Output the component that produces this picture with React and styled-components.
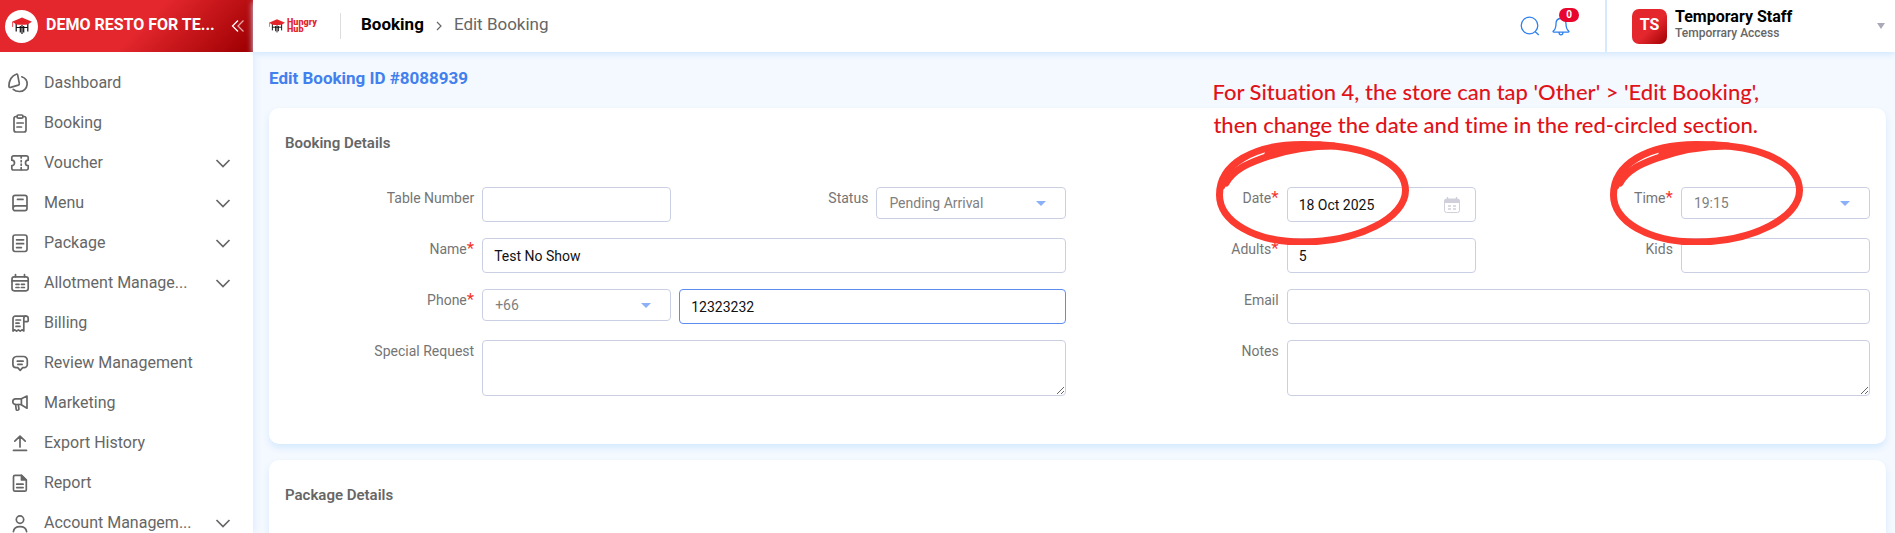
import React, { useState } from "react";
import styled, { createGlobalStyle } from "styled-components";

const menuItems = [
  { name: "Dashboard", icon: "dashboard" },
  { name: "Booking", icon: "booking" },
  { name: "Voucher", icon: "voucher", more: true },
  { name: "Menu", icon: "menu", more: true },
  { name: "Package", icon: "package", more: true },
  { name: "Allotment Manage...", icon: "allotment", more: true },
  { name: "Billing", icon: "billing" },
  { name: "Review Management", icon: "review" },
  { name: "Marketing", icon: "marketing" },
  { name: "Export History", icon: "exportHistory" },
  { name: "Report", icon: "report" },
  { name: "Account Managem...", icon: "account", more: true },
];

const icons = {
  dashboard: (
    <>
      <path d="M8.2 4.200C3.800 5.400.9 10.600.9 16c0 1.200.8 1.700 1.700 1.400l7.700-2.300c.9-.3 1.200-.8 1-1.700L9.700 5.100c-.2-.8-.7-1.200-1.500-.9z" />
      <path d="M13.800 6.800c3.400 1.200 5.600 4.300 5.300 7.800-.4 4-3.600 6.900-7.600 6.900-2.100 0-4.600-.7-6.300-2.200" />
    </>
  ),
  booking: (
    <>
      <path d="M9 6.500H8a2 2 0 0 0-2 2V20a2 2 0 0 0 2 2h8a2 2 0 0 0 2-2V8.500a2 2 0 0 0-2-2h-1" />
      <rect x="9" y="5" width="6" height="3.200" rx="1.400" />
      <path d="M9 13h6.200M9 17h4.500" />
    </>
  ),
  voucher: (
    <>
      <path d="M5.500 5.800h13a1.700 1.700 0 0 1 1.700 1.700v2.700a2.700 2.700 0 0 0 0 5.400v2.700a1.700 1.700 0 0 1-1.700 1.700h-13a1.700 1.700 0 0 1-1.700-1.700v-2.700a2.700 2.700 0 0 0 0-5.400V7.500a1.700 1.700 0 0 1 1.700-1.700z" />
      <path d="M13.200 6v2M13.200 10.500v1.200M13.200 14v1.200M13.200 17.600v2" />
    </>
  ),
  menu: (
    <>
      <path d="M5 18.500V7.500a2.200 2.200 0 0 1 2.200-2.200h9.600A2.200 2.200 0 0 1 19 7.500v11a2.200 2.200 0 0 1-2.200 2.200H7.200A2.200 2.200 0 0 1 5 18.500c0-1.500 1-2.600 2.500-2.600H19" />
      <path d="M9.500 9.400h5.500" />
    </>
  ),
  package: (
    <>
      <rect x="5" y="5" width="14" height="16.500" rx="2.200" />
      <path d="M8.600 9.800h7M8.600 13.700h7M8.600 17.600h4.800" />
    </>
  ),
  allotment: (
    <>
      <rect x="4" y="6.800" width="16.200" height="14" rx="2.200" />
      <path d="M4 10.900h16.200M7.500 4.500v2.300M16.500 4.500v2.300" />
      <path d="M8 14.300h3M13.400 14.300h3M8 17.500h3M13.400 17.500h3" />
    </>
  ),
  billing: (
    <>
      <path d="M5 21V8.500A2.300 2.300 0 0 1 7.300 6.200H18M15.800 11.600V21l-1.800-1.200-1.800 1.400-1.800-1.400-1.800 1.400-1.800-1.400L5 21" />
      <path d="M15.800 11.600V8.400c0-1.300 1-2.200 2.200-2.200s2.200.9 2.200 2.200v2.400c0 .5-.3.800-.8.800z" />
      <path d="M8 10h4.500M8 13.200h3M8 16.400h4" />
    </>
  ),
  review: (
    <>
      <path d="M8.500 6.500h7A3.800 3.800 0 0 1 19.300 10.300v4.200a3.200 3.200 0 0 1-3.200 3.200h-1.400l-2.500 2.600-2.500-2.600H8.100a3.200 3.200 0 0 1-3.200-3.200v-4.200A3.700 3.700 0 0 1 8.500 6.500z" />
      <path d="M9.300 11.200h5.800M9.900 14.400h4.200" />
    </>
  ),
  marketing: (
    <>
      <path d="M12.800 8.900H7.600a2.700 2.700 0 0 0 0 5.600h5.200l6.200 3.700V6z" />
      <path d="M13.400 9v5.500M7.600 14.600l.6 4.800c.1.700.6 1 1.200.8l.8-.2c.6-.2.8-.6.7-1.200l-.6-4.200" />
    </>
  ),
  exportHistory: <path d="M12 17V6.400M6.800 11.200 12 6.200l5.200 5M5.500 20.400h13" />,
  report: (
    <>
      <path d="M13.500 5.300H7A1.500 1.500 0 0 0 5.500 6.800v12.900A1.500 1.500 0 0 0 7 21.200h9.800a1.500 1.500 0 0 0 1.500-1.500V10z" />
      <path d="M13.500 5.300V10h4.800z" fill="#666" />
      <path d="M8.700 14.200h6.400M8.700 17.600h6.400" />
    </>
  ),
  account: (
    <>
      <circle cx="12" cy="9.600" r="3.700" />
      <path d="M5.400 21.600c.4-3.200 2.800-5 6.600-5s6.200 1.800 6.600 5" />
    </>
  ),
};

const BrandMark = ({ size }) => (
  <svg width={size} height={size} viewBox="0 0 20 20" aria-hidden="true">
    <path
      d="M4.200 7v8.500M15.800 7v8.500M8.300 10v6.500M11.700 10v6.500M4.200 11.500h11.600M10 9v9"
      stroke="#111"
      strokeWidth="1.200"
      fill="none"
    />
    <path d="M10 1.500 20 5.800 15.500 8.500c-3.500.3-7.500.3-11 0L0 5.800z" fill="#e3242b" />
    <path d="M.6 6v5" stroke="#e3242b" strokeWidth=".8" />
  </svg>
);

const Circle = () => (
  <CircleSvg viewBox="0 0 193 104" aria-hidden="true">
    <path d="M118 5c42 4 71.500 21 71.500 44.500C189.500 76 144 101 86 101 38 101 3.500 80 3.500 54 3.500 23 38 3.500 86 3.500c14 0 24 0 32 1.500" />
    <path d="M10 42C17 29 31 23 46 17.500 68 9.500 90 5 118 5" />
    <path d="M52 13C66 8 80 6 104 4M6 45l2-7" />
  </CircleSvg>
);

const CalendarIcon = () => (
  <FieldIcon width="18" height="18" viewBox="0 0 18 18" $right={15} aria-hidden="true">
    <rect x="1.500" y="3" width="15" height="13.500" rx="2" fill="none" stroke="#cfd0da" />
    <path d="M1.500 7V4.500a1.500 1.500 0 0 1 1.500-1.500h12a1.500 1.500 0 0 1 1.500 1.500V7z" fill="#cfd0da" />
    <path d="M4.500 1v3M13.500 1v3M5 10h3M10 10h3M5 13h3M10 13h3" stroke="#cfd0da" strokeWidth="1.300" />
  </FieldIcon>
);

const Caret = () => (
  <FieldIcon width="10" height="5" viewBox="0 0 10 5" $right={20} aria-hidden="true">
    <path d="M0 0h10L5 5z" fill="#8cb0f5" />
  </FieldIcon>
);

const FieldLabel = ({ htmlFor, required, circled, children }) => (
  <LabelCell>
    <Label htmlFor={htmlFor}>
      {children}
      {required && <Star>*</Star>}
    </Label>
    {circled && <Circle />}
  </LabelCell>
);

const App = () => {
  const [form, setForm] = useState({
    table: "",
    status: "Pending Arrival",
    name: "Test No Show",
    code: "+66",
    phone: "12323232",
    request: "",
    date: "18 Oct 2025",
    time: "19:15",
    adults: "5",
    kids: "",
    email: "",
    notes: "",
  });

  const bind = (id) => ({
    id,
    value: form[id],
    onChange: (e) => setForm({ ...form, [id]: e.target.value }),
  });

  return (
    <>
      <GlobalStyle />
      <Page>
        <Sidebar>
          <Brand>
            <BrandLogo>
              <BrandMark size={20} />
            </BrandLogo>
            <BrandName>DEMO RESTO FOR TE...</BrandName>
            <CollapseButton type="button" aria-label="Collapse menu">
              <svg width="14" height="14" viewBox="0 0 14 14" fill="none" stroke="#fff" strokeWidth="1.300">
                <path d="M7 1.500 1.500 7 7 12.500" />
                <path d="M12.500 1.500 7 7l5.500 5.500" opacity=".65" />
              </svg>
            </CollapseButton>
          </Brand>
          <Menu>
            {menuItems.map((item) => (
              <MenuLink key={item.name} href="#">
                <MenuIcon viewBox="0 0 24 24" aria-hidden="true">
                  {icons[item.icon]}
                </MenuIcon>
                <MenuText>{item.name}</MenuText>
                {item.more && (
                  <Chevron viewBox="0 0 16 16" aria-hidden="true">
                    <path d="M1.500 6 8 12.500 14.500 6" />
                  </Chevron>
                )}
              </MenuLink>
            ))}
          </Menu>
        </Sidebar>

        <Main>
          <TopBar>
            <HungryHub>
              <BrandMark size={16} />
              <LogoText>
                Hungry
                <br />
                Hub
              </LogoText>
            </HungryHub>
            <Breadcrumb>
              <CrumbLink href="#">Booking</CrumbLink>
              <CrumbArrow viewBox="0 0 6 10" aria-hidden="true">
                <path d="M1 1l4 4-4 4" />
              </CrumbArrow>
              <span>Edit Booking</span>
            </Breadcrumb>
            <Tools>
              <IconButton type="button" aria-label="Search">
                <svg width="20" height="20" viewBox="0 0 20 20" fill="none" stroke="#2f80ed" strokeWidth="1.300">
                  <circle cx="9.500" cy="9.500" r="8.300" />
                  <path d="M15 15.500l3.800 3.500" />
                </svg>
              </IconButton>
              <IconButton type="button" aria-label="Notifications">
                <svg width="18" height="20" viewBox="0 0 18 20" fill="none" stroke="#2f80ed" strokeWidth="1.300">
                  <path d="M9 2.500c-3.200 0-5 2.300-5 5.200 0 4.800-1.300 6.200-2.700 7.300-.5.500-.2 1.200.5 1.200h14.400c.7 0 1-.7.5-1.200C15.300 13.900 14 12.500 14 7.700c0-2.900-1.800-5.200-5-5.200zM9 2.500V1M7 16.500c.1 1.500.9 2.300 2 2.300s1.900-.8 2-2.300" />
                </svg>
                <Badge>0</Badge>
              </IconButton>
            </Tools>
            <Account type="button">
              <Avatar>TS</Avatar>
              <AccountText>
                <AccountName>Temporary Staff</AccountName>
                <AccountRole>Temporrary Access</AccountRole>
              </AccountText>
              <svg width="8" height="6" viewBox="0 0 8 6" aria-hidden="true">
                <path d="M0 0h8L4 6z" fill="#a9a9b8" />
              </svg>
            </Account>
          </TopBar>

          <Content>
            <PageTitle>Edit Booking ID #8088939</PageTitle>
            <Note>
              For Situation 4, the store can tap 'Other' &gt; 'Edit Booking',
              <br />
              then change the date and time in the red-circled section.
            </Note>
            <Card>
              <CardTitle>Booking Details</CardTitle>
              <Form>
                <Half>
                  <FieldLabel htmlFor="table">Table Number</FieldLabel>
                  <Field>
                    <Input {...bind("table")} />
                  </Field>
                  <FieldLabel htmlFor="status">Status</FieldLabel>
                  <Field>
                    <Select {...bind("status")}>
                      <option>Pending Arrival</option>
                      <option>Arrived</option>
                      <option>No Show</option>
                    </Select>
                    <Caret />
                  </Field>

                  <FieldLabel htmlFor="name" required>Name</FieldLabel>
                  <Field $span={3}>
                    <Input {...bind("name")} />
                  </Field>

                  <FieldLabel htmlFor="phone" required>Phone</FieldLabel>
                  <Field>
                    <Select {...bind("code")} aria-label="Country code">
                      <option>+66</option>
                      <option>+65</option>
                    </Select>
                    <Caret />
                  </Field>
                  <Field $span={2}>
                    <Input type="tel" $active {...bind("phone")} />
                  </Field>

                  <FieldLabel htmlFor="request">Special Request</FieldLabel>
                  <Field $span={3}>
                    <TextArea {...bind("request")} />
                  </Field>
                </Half>

                <Half>
                  <FieldLabel htmlFor="date" required circled>Date</FieldLabel>
                  <Field>
                    <Input {...bind("date")} />
                    <CalendarIcon />
                  </Field>
                  <FieldLabel htmlFor="time" required circled>Time</FieldLabel>
                  <Field>
                    <Select {...bind("time")}>
                      <option>19:15</option>
                      <option>19:30</option>
                    </Select>
                    <Caret />
                  </Field>

                  <FieldLabel htmlFor="adults" required>Adults</FieldLabel>
                  <Field>
                    <Input {...bind("adults")} />
                  </Field>
                  <FieldLabel htmlFor="kids">Kids</FieldLabel>
                  <Field>
                    <Input {...bind("kids")} />
                  </Field>

                  <FieldLabel htmlFor="email">Email</FieldLabel>
                  <Field $span={3}>
                    <Input type="email" {...bind("email")} />
                  </Field>

                  <FieldLabel htmlFor="notes">Notes</FieldLabel>
                  <Field $span={3}>
                    <TextArea {...bind("notes")} />
                  </Field>
                </Half>
              </Form>
            </Card>
            <Card>
              <CardTitle>Package Details</CardTitle>
            </Card>
          </Content>
        </Main>
      </Page>
    </>
  );
};

const GlobalStyle = createGlobalStyle`
  * {
    box-sizing: border-box;
  }
  body {
    margin: 0;
    font-family: Roboto, "Liberation Sans", sans-serif;
    color: #666;
    background: #f4f8ff;
  }
  button, input, select, textarea {
    font-family: inherit;
  }
`;

const Page = styled.div`
  display: flex;
  height: 100vh;
  overflow: hidden;
`;

const Sidebar = styled.aside`
  width: 253px;
  flex-shrink: 0;
  background: #fff;
  box-shadow: 0 0 8px #d3e8fc;
  overflow: hidden;
`;

const Brand = styled.div`
  display: flex;
  align-items: center;
  height: 52px;
  padding: 0 8px 0 5px;
  background: linear-gradient(135deg, #e3272d 55%, #a00003 97%);
`;

const BrandLogo = styled.div`
  display: flex;
  align-items: center;
  justify-content: center;
  width: 33px;
  height: 33px;
  border-radius: 50%;
  background: #fff;
`;

const BrandName = styled.div`
  flex: 1;
  padding: 0 0 4px 8px;
  font-size: 16px;
  font-weight: 700;
  color: #fff;
  white-space: nowrap;
`;

const CollapseButton = styled.button`
  display: flex;
  padding: 0;
  border: none;
  background: none;
  cursor: pointer;
`;

const Menu = styled.nav`
  padding-top: 10px;
`;

const MenuLink = styled.a`
  display: flex;
  align-items: center;
  height: 40px;
  padding: 0 22px 0 8px;
  color: #666;
  text-decoration: none;
`;

const MenuIcon = styled.svg`
  width: 24px;
  height: 24px;
  flex-shrink: 0;
  overflow: visible;
  fill: none;
  stroke: #666;
  stroke-width: 1.7;
  stroke-linecap: round;
  stroke-linejoin: round;
`;

const MenuText = styled.span`
  flex: 1;
  padding-left: 12px;
  font-size: 16px;
  white-space: nowrap;
`;

const Chevron = styled.svg`
  width: 16px;
  height: 16px;
  fill: none;
  stroke: #666;
  stroke-width: 1.7;
`;

const Main = styled.div`
  flex: 1;
  min-width: 0;
  display: flex;
  flex-direction: column;
`;

const TopBar = styled.header`
  display: flex;
  align-items: center;
  height: 52px;
  flex-shrink: 0;
  padding-left: 16px;
  background: #fff;
  box-shadow: 0 2px 6px #cfe6fd;
`;

const HungryHub = styled.div`
  display: flex;
  align-items: center;
  gap: 2px;
  width: 72px;
  height: 26px;
  border-right: 1px solid #ddd;
`;

const LogoText = styled.div`
  font-size: 9px;
  font-weight: 900;
  line-height: 7px;
  color: #e3242b;
`;

const Breadcrumb = styled.nav`
  display: flex;
  align-items: center;
  gap: 12px;
  padding: 0 0 4px 20px;
  font-size: 17px;
`;

const CrumbLink = styled.a`
  font-weight: 700;
  color: #000;
  text-decoration: none;
`;

const CrumbArrow = styled.svg`
  width: 6px;
  height: 10px;
  margin-top: 4px;
  fill: none;
  stroke: #666;
  stroke-width: 1.2;
`;

const Tools = styled.div`
  display: flex;
  align-items: center;
  gap: 12px;
  height: 100%;
  margin-left: auto;
  padding-right: 35px;
  border-right: 2px solid #d6eafd;
`;

const IconButton = styled.button`
  position: relative;
  display: flex;
  padding: 0;
  border: none;
  background: none;
  cursor: pointer;
`;

const Badge = styled.span`
  position: absolute;
  top: -8px;
  left: 7px;
  width: 20px;
  border-radius: 7px;
  background: #e6062e;
  color: #fff;
  font-size: 10px;
  font-weight: 700;
  line-height: 14px;
  text-align: center;
`;

const Account = styled.button`
  display: flex;
  align-items: center;
  width: 288px;
  padding: 0 10px 0 25px;
  border: none;
  background: none;
  text-align: left;
  cursor: pointer;
`;

const Avatar = styled.span`
  width: 35px;
  padding-bottom: 4px;
  border-radius: 7px;
  background: linear-gradient(135deg, #e3272d 55%, #a00003);
  color: #fff;
  font-size: 16px;
  font-weight: 700;
  line-height: 31px;
  text-align: center;
`;

const AccountText = styled.span`
  flex: 1;
  display: flex;
  flex-direction: column;
  padding: 0 0 4px 8px;
`;

const AccountName = styled.span`
  font-size: 16px;
  font-weight: 700;
  line-height: 18px;
  color: #000;
`;

const AccountRole = styled.span`
  font-size: 12px;
  font-weight: 500;
  line-height: 15px;
  color: #666;
`;

const Content = styled.main`
  position: relative;
  display: flex;
  flex-direction: column;
  gap: 16px;
  padding: 16px 9px 16px 16px;
`;

const PageTitle = styled.h1`
  margin: 0;
  padding-bottom: 4px;
  font-size: 17px;
  font-weight: 700;
  line-height: 20px;
  color: #4280ee;
`;

/* sits over the heading and the top of the first card */
const Note = styled.p`
  position: absolute;
  top: 23px;
  right: 136px;
  z-index: 2;
  margin: 0;
  color: #e01319;
  font-family: Lato, "Liberation Sans", sans-serif;
  font-size: 22px;
  font-weight: 500;
  font-variant-ligatures: none;
  line-height: 33px;
  text-align: center;
  white-space: nowrap;
`;

const Card = styled.section`
  padding: 24px 16px 48px;
  border-radius: 10px;
  background: #fff;
  box-shadow: 0 4px 6px #d6eafd;
`;

const CardTitle = styled.h2`
  margin: 0 0 32px;
  font-size: 15px;
  font-weight: 600;
  line-height: 23px;
`;

const Form = styled.form`
  display: grid;
  grid-template-columns: 1fr 1fr;
  gap: 24px;
`;

const Half = styled.div`
  display: grid;
  grid-template-columns: repeat(4, minmax(0, 1fr));
  gap: 16px 8px;
  align-items: start;
`;

const LabelCell = styled.div`
  position: relative;
  line-height: 22px;
  text-align: right;
`;

const Label = styled.label`
  font-size: 14px;
  color: #757575;
`;

const Star = styled.span`
  color: #f5352c;
  font-size: 17px;
  line-height: 1;
`;

const Field = styled.div`
  position: relative;
  display: flex;
  align-items: center;
  grid-column: span ${(props) => props.$span || 1};
`;

const Input = styled.input`
  width: 100%;
  height: 35px;
  padding: 0 11px;
  border: 1px solid ${(props) => (props.$active ? "#5b8def" : "#cbcfe3")};
  border-radius: 4px;
  outline: none;
  background: #fff;
  color: #111;
  font-size: 14px;
`;

const Select = styled.select`
  width: 100%;
  height: 32px;
  padding: 0 12px;
  border: 1px solid #cbcfe3;
  border-radius: 4px;
  outline: none;
  appearance: none;
  background: #fff;
  color: #808080;
  font-size: 14px;
`;

const TextArea = styled.textarea`
  width: 100%;
  height: 56px;
  padding: 8px 11px;
  border: 1px solid #cbcfe3;
  border-radius: 4px;
  outline: none;
  resize: vertical;
  font-size: 14px;
`;

const FieldIcon = styled.svg`
  position: absolute;
  right: ${(props) => props.$right}px;
  pointer-events: none;
`;

/* hand drawn ring round a label and its value */
const CircleSvg = styled.svg`
  position: absolute;
  top: -46px;
  right: -130px;
  z-index: 1;
  width: 193px;
  height: 104px;
  fill: none;
  stroke: #fb3a30;
  stroke-width: 7;
  stroke-linecap: round;
  pointer-events: none;
`;

export default App;
